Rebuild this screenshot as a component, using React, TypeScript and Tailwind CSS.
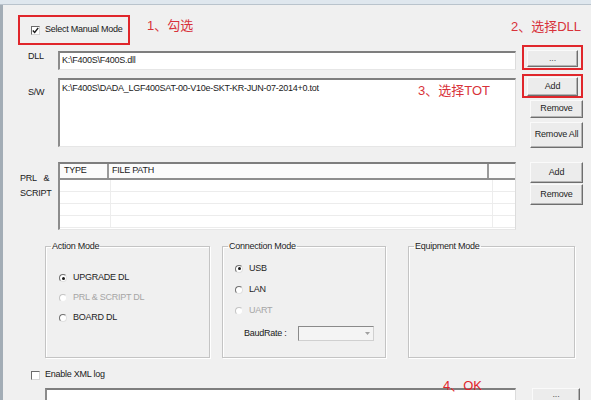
import React from "react";

// Win7-era classic dialog: manual mode download settings, with red tutorial notes on top

const sunken =
  "bg-white border-t-2 border-l-2 border-r border-b border-t-[#7e7e7e] border-l-[#8c8c8c] border-r-[#dcdcdc] border-b-[#e6e6e6]";

function Btn({ label, className = "" }: { label: string; className?: string }) {
  return (
    <div
      className={`flex items-center justify-center bg-[#ececec] border border-t-[#fafafa] border-l-[#fafafa] border-r-[#6e6e6e] border-b-[#6e6e6e] shadow-[inset_-1px_-1px_0_#b4b4b4] text-[9px] tracking-[-0.2px] text-[#1e1e1e] ${className}`}
    >
      {label}
    </div>
  );
}

function CheckBox({ checked }: { checked?: boolean }) {
  return (
    <div className="w-[9px] h-[9px] border border-t-[#6b6b6b] border-l-[#6b6b6b] border-r-[#d6d6d6] border-b-[#d6d6d6] bg-white flex items-center justify-center shrink-0">
      {checked && (
        <svg width="7" height="7" viewBox="0 0 7 7">
          <path d="M0.8 3.4 L2.7 5.4 L6.2 0.9" fill="none" stroke="#1a1a1a" strokeWidth="1.4" />
        </svg>
      )}
    </div>
  );
}

function Radio({
  label,
  checked,
  disabled,
}: {
  label: string;
  checked?: boolean;
  disabled?: boolean;
}) {
  return (
    <div className="flex items-center h-full gap-[6px]">
      <div
        className={`w-[8px] h-[8px] rounded-full border bg-white flex items-center justify-center shrink-0 ${
          disabled ? "border-t-[#c4c4c4] border-l-[#c4c4c4] border-r-[#f0f0f0] border-b-[#f0f0f0]" : "border-t-[#707070] border-l-[#707070] border-r-[#e0e0e0] border-b-[#e0e0e0]"
        }`}
      >
        {checked && <div className="w-[3px] h-[3px] rounded-full bg-[#1a1a1a]" />}
      </div>
      <span className={disabled ? "text-[#a6a6a6]" : "text-[#1e1e1e]"}>{label}</span>
    </div>
  );
}

function Group({
  title,
  className = "",
  children,
}: {
  title: string;
  className?: string;
  children?: React.ReactNode;
}) {
  return (
    <fieldset
      className={`h-[117px] border border-[#c4c4c4] shadow-[1px_1px_0_#ffffff,inset_1px_1px_0_#ffffff] ${className}`}
    >
      <legend className="ml-[5px] px-[1px] leading-[10px] text-[#1e1e1e]">{title}</legend>
      {children}
    </fieldset>
  );
}

export default function App() {
  const listRows = [0, 1, 2, 3];
  return (
    <div className="relative w-[591px] h-[400px] overflow-hidden bg-[#f0f0f0] flex flex-col font-['Liberation_Sans','Noto_Sans_CJK_SC',sans-serif] text-[9px] tracking-[-0.25px] text-[#1a1a1a]">
      {/* window frame edge */}
      <div className="h-[5px] shrink-0 bg-[#dfe7ee] border-b border-[#b9c3cc]" />

      <div className="flex-1 flex flex-col border-l-[3px] border-[#a3adb6]">
        {/* row 1: manual mode + notes */}
        <div className="flex h-[40px] shrink-0">
          <div className="ml-[15px] mt-[10px] w-[112px] h-[30px] border-2 border-[#e0262b] flex items-center pl-[11px] gap-[5px]">
            <CheckBox checked />
            <span>Select Manual Mode</span>
          </div>
          <div className="ml-[17px] mt-[12px] text-[13px] leading-[18px] tracking-normal text-[#d8323a]">
            1、勾选
          </div>
          <div className="ml-auto mr-[10px] mt-[13px] text-[13px] leading-[18px] tracking-normal text-[#d8323a]">
            2、选择DLL
          </div>
        </div>

        {/* DLL */}
        <div className="flex h-[25px] shrink-0">
          <div className="w-[55px] pl-[25px] pt-[6px] leading-[11px]">DLL</div>
          <div className={`w-[458px] h-[19px] mt-[6px] flex items-center pl-[2px] ${sunken}`}>
            K:\F400S\F400S.dll
          </div>
          <div className="ml-[6px] w-[61px] h-[25px] border-2 border-[#e0262b] pl-[3px] pt-[3px]">
            <Btn label="..." className="w-[51px] h-[17px] text-[#555]" />
          </div>
        </div>

        {/* S/W */}
        <div className="flex h-[78px] shrink-0">
          <div className="w-[55px] pl-[25px] pt-[17px] leading-[11px]">S/W</div>
          <div className={`w-[458px] h-[69px] mt-[8px] pl-[2px] pt-[3px] leading-[11px] ${sunken}`}>
            K:\F400S\DADA_LGF400SAT-00-V10e-SKT-KR-JUN-07-2014+0.tot
          </div>
          <div className="ml-[6px] w-[61px] flex flex-col">
            <div className="mt-[4px] h-[24px] border-2 border-[#e0262b] pl-[3px] pt-[1px]">
              <Btn label="Add" className="w-[51px] h-[19px]" />
            </div>
            <Btn label="Remove" className="ml-[8px] mt-[2px] w-[53px] h-[18px]" />
            <Btn label="Remove All" className="ml-[8px] mt-[4px] w-[53px] h-[26px]" />
          </div>
        </div>

        {/* PRL & SCRIPT */}
        <div className="flex h-[68px] mt-[14px] shrink-0">
          <div className="w-[55px] pl-[17px] pt-[9px] leading-[15px]">
            <div>PRL&nbsp;&nbsp;&nbsp;&amp;</div>
            <div>SCRIPT</div>
          </div>
          <div className={`w-[458px] h-[68px] flex flex-col overflow-hidden ${sunken}`}>
            <div className="flex h-[16px] shrink-0 border-b-2 border-[#8e8e8e] bg-[#fbfbfb]">
              <div className="w-[49px] pl-[4px] flex items-center border-r-2 border-[#9a9a9a]">TYPE</div>
              <div className="w-[380px] pl-[3px] flex items-center border-r-2 border-[#9a9a9a]">FILE PATH</div>
              <div className="flex-1" />
            </div>
            {listRows.map((r) => (
              <div key={r} className="flex h-[12px] shrink-0 border-b border-[#ececec]">
                <div className="w-[51px] border-r border-[#ededed]" />
                <div className="w-[382px] border-r border-[#ededed]" />
                <div className="flex-1" />
              </div>
            ))}
          </div>
          <div className="ml-[14px] flex flex-col">
            <Btn label="Add" className="w-[53px] h-[21px]" />
            <Btn label="Remove" className="mt-[1px] w-[53px] h-[21px]" />
          </div>
        </div>

        {/* mode groups */}
        <div className="flex mt-[11px] shrink-0">
          <Group title="Action Mode" className="ml-[42px] w-[165px]">
            <div className="flex flex-col pl-[13px] pt-[17px]">
              <div className="h-[20px]">
                <Radio label="UPGRADE DL" checked />
              </div>
              <div className="h-[20px]">
                <Radio label="PRL & SCRIPT DL" disabled />
              </div>
              <div className="h-[19px]">
                <Radio label="BOARD DL" />
              </div>
            </div>
          </Group>
          <Group title="Connection Mode" className="ml-[12px] w-[164px]">
            <div className="flex flex-col pl-[12px] pt-[7px]">
              <div className="h-[21px]">
                <Radio label="USB" checked />
              </div>
              <div className="h-[21px]">
                <Radio label="LAN" />
              </div>
              <div className="h-[21px]">
                <Radio label="UART" disabled />
              </div>
              <div className="flex items-center h-[15px] mt-[5px] pl-[9px]">
                <span className="w-[54px]">BaudRate :</span>
                <div className="w-[76px] h-[15px] flex border border-t-[#8a8a8a] border-l-[#8a8a8a] border-r-[#d0d0d0] border-b-[#d0d0d0] bg-[#f4f4f4]">
                  <div className="flex-1" />
                  <div className="w-[11px] flex items-center justify-center">
                    <svg width="5" height="3" viewBox="0 0 5 3">
                      <path d="M0 0 L5 0 L2.5 3 Z" fill="#a0a0a0" />
                    </svg>
                  </div>
                </div>
              </div>
            </div>
          </Group>
          <Group title="Equipment Mode" className="ml-[22px] w-[167px]" />
        </div>

        {/* XML log */}
        <div className="flex items-center h-[12px] mt-[11px] pl-[28px] gap-[5px] shrink-0">
          <CheckBox />
          <span>Enable XML log</span>
        </div>

        {/* bottom field */}
        <div className="flex mt-[7px] shrink-0">
          <div className={`ml-[42px] w-[471px] h-[20px] ${sunken}`} />
          <Btn label="..." className="ml-[16px] w-[48px] h-[20px] !items-start pt-[1px] leading-[9px] text-[#555]" />
        </div>
      </div>

      {/* tutorial notes drawn over the dialog */}
      <div className="absolute left-[418px] top-[82px] text-[13px] leading-[18px] tracking-normal text-[#d8323a]">
        3、选择TOT
      </div>
      <div className="absolute left-[443px] top-[377px] text-[13px] leading-[18px] tracking-normal text-[#e0262b]">
        4、OK
      </div>
    </div>
  );
}
